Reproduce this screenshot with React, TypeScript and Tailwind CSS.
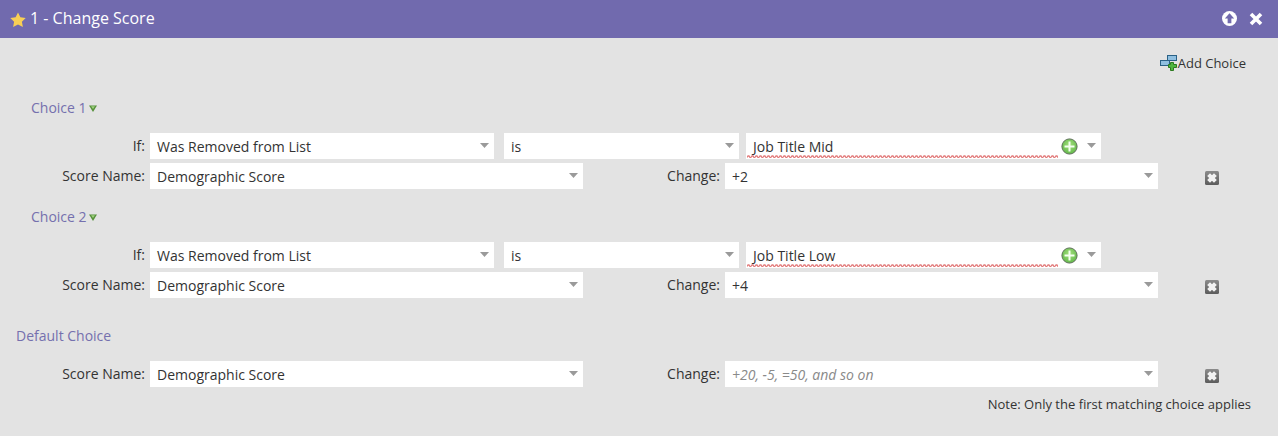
import React from "react";

const Caret = () => (
  <svg width="9" height="5" viewBox="0 0 9 5" className="shrink-0">
    <path d="M0 0H9L4.5 5Z" fill="#9a9a9a" />
  </svg>
);

const Field = ({ w, text, placeholder, children, underline }: { w: string; text: string; placeholder?: boolean; children?: React.ReactNode; underline?: string }) => (
  <div className={`${w} h-[26px] bg-white flex items-center pl-[7px] pr-[5px] shrink-0 relative`}>
    <span className={placeholder ? "italic text-[#8a8a8a] text-[14px] flex-1 leading-[26px] mt-px" : "text-[#333] text-[14px] flex-1 leading-[26px] mt-px"}>{text}</span>
    {underline && <Squiggle w={underline} />}
    {children}
    <span className="mb-[2px] ml-[10px] flex"><Caret /></span>
  </div>
);

const Squiggle = ({ w }: { w: string }) => (
  <svg className="absolute left-[1px] bottom-[1px]" width={w} height="3">
    <defs>
      <pattern id={`sq${w}`} width="4" height="3" patternUnits="userSpaceOnUse">
        <path d="M0 2.5L1 1L2 1L3 2.5L4 2.5" stroke="#e27a7a" strokeWidth="1.3" fill="none" />
      </pattern>
    </defs>
    <rect width={w} height="3" fill={`url(#sq${w})`} />
  </svg>
);

const PlusCircle = () => (
  <svg width="17" height="17" viewBox="0 0 17 17" className="shrink-0">
    <defs>
      <radialGradient id="pc" cx="50%" cy="40%" r="60%">
        <stop offset="0%" stopColor="#a5e07e" />
        <stop offset="100%" stopColor="#62b84a" />
      </radialGradient>
    </defs>
    <circle cx="8.5" cy="8.5" r="7.6" fill="url(#pc)" stroke="#5f6f5a" strokeWidth="1" />
    <path d="M8.5 3.5V13.5M3.5 8.5H13.5" stroke="#f4fff0" strokeWidth="2" />
  </svg>
);

const XBox = () => (
  <svg width="14" height="14" viewBox="0 0 14 14" className="shrink-0">
    <defs>
      <linearGradient id="xb" x1="0" y1="0" x2="0" y2="1">
        <stop offset="0%" stopColor="#8c8c8c" />
        <stop offset="100%" stopColor="#5c5c5c" />
      </linearGradient>
    </defs>
    <rect x="0" y="0" width="14" height="14" rx="1.5" fill="url(#xb)" />
    <path d="M3.6 3.6L10.4 10.4M10.4 3.6L3.6 10.4" stroke="#f2f2f2" strokeWidth="4" />
  </svg>
);

const GreenDown = () => (
  <svg width="8" height="7" viewBox="0 0 8 7">
    <path d="M0 0.5H8L4 7Z" fill="#55913a" />
    <path d="M2 1.3H6L4 4Z" fill="#9fd07f" />
  </svg>
);

const Label = ({ children, w }: { children: React.ReactNode; w: string }) => (
  <div className={`${w} shrink-0 text-right pr-[5px] text-[14px] text-[#333] leading-[26px]`}>{children}</div>
);

const ScoreRow = ({ value, change, placeholder }: { value: string; change: string; placeholder?: boolean }) => (
  <div className="flex items-center">
    <Label w="w-[150px]">Score Name:</Label>
    <Field w="w-[433px]" text={value} />
    <Label w="w-[142px]">Change:</Label>
    <Field w="w-[433px]" text={change} placeholder={placeholder} />
    <div className="ml-[47px] mt-[3px] flex"><XBox /></div>
  </div>
);

const IfRow = ({ value, underline }: { value: string; underline: string }) => (
  <div className="flex items-center mb-[4px]">
    <Label w="w-[150px]">If:</Label>
    <Field w="w-[344px]" text="Was Removed from List" />
    <div className="w-[10px]" />
    <Field w="w-[235px]" text="is" />
    <div className="w-[7px]" />
    <Field w="w-[355px]" text={value} underline={underline}>
      <span className="flex mr-[-1px] mt-[1px]"><PlusCircle /></span>
    </Field>
  </div>
);

const Heading = ({ children, pl, arrow }: { children: React.ReactNode; pl: string; arrow?: boolean }) => (
  <div className={`${pl} flex items-center gap-[2px] text-[14px] text-[#7570ae] leading-[20px]`}>
    {children}
    {arrow && <GreenDown />}
  </div>
);

export default function App() {
  return (
    <div className="w-[1278px] h-[436px] bg-[#e3e3e3] overflow-hidden font-['Open_Sans',sans-serif]">
      <div className="h-[38px] bg-[#716aae] flex items-center pl-[10px] pr-[15px]">
        <svg width="16" height="16" viewBox="0 0 16 16" className="mt-[2px]">
          <path d="M8 0.5L10.4 5.3L15.7 6L11.9 9.7L12.9 15L8 12.5L3.1 15L4.1 9.7L0.3 6L5.6 5.3Z" fill="#f8cf55" />
        </svg>
        <span className="ml-[4px] text-white text-[16px] leading-[20px] mb-[2px]">1 - Change Score</span>
        <div className="flex-1" />
        <svg width="15" height="15" viewBox="0 0 16 16" className="mb-[1px]">
          <circle cx="8" cy="8" r="8" fill="#fff" />
          <path d="M8 2.5L13 8H10V13H6V8H3Z" fill="#716aae" />
        </svg>
        <svg width="14" height="14" viewBox="0 0 14 14" className="ml-[12px] mb-[1px]">
          <path d="M2 2L12 12M12 2L2 12" stroke="#fff" strokeWidth="3.6" />
        </svg>
      </div>

      <div className="flex justify-end items-center h-[20px] mt-[15px] pr-[32px]">
        <svg width="18" height="16" viewBox="0 0 18 16">
          <rect x="0.5" y="5.5" width="9" height="5" fill="#8fbfe0" stroke="#2a6186" />
          <rect x="7.5" y="0.5" width="9" height="5" fill="#8fbfe0" stroke="#2a6186" />
          <path d="M10.5 7.5H13.5V9.5H16.5V12.5H13.5V15.5H10.5V12.5H8.5V9.5H10.5Z" fill="#4fb63f" stroke="#2c7a20" strokeWidth="1" />
        </svg>
        <span className="text-[13px] text-[#333] leading-[20px]">Add Choice</span>
      </div>

      <div className="mt-[25px]"><Heading pl="pl-[31px]" arrow>Choice 1</Heading></div>
      <div className="mt-[15px]">
        <IfRow value="Job Title Mid" underline="311" />
        <ScoreRow value="Demographic Score" change="+2" />
      </div>

      <div className="mt-[18px]"><Heading pl="pl-[31px]" arrow>Choice 2</Heading></div>
      <div className="mt-[15px]">
        <IfRow value="Job Title Low" underline="311" />
        <ScoreRow value="Demographic Score" change="+4" />
      </div>

      <div className="mt-[28px]"><Heading pl="pl-[16px]">Default Choice</Heading></div>
      <div className="mt-[15px]">
        <ScoreRow value="Demographic Score" change="+20, -5, =50, and so on" placeholder />
      </div>
      <div className="mt-[8px] pr-[27px] text-right text-[13px] text-[#333] leading-[18px]">Note: Only the first matching choice applies</div>
    </div>
  );
}
